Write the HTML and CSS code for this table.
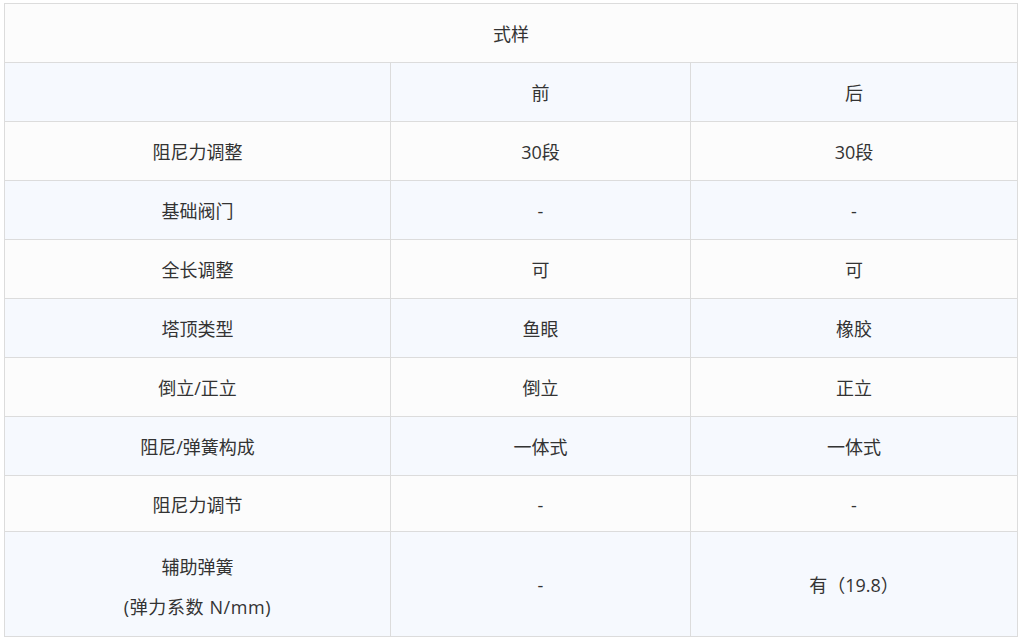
FILE: index.html
```html
<!DOCTYPE html>
<html lang="zh-CN">
<head>
<meta charset="utf-8">
<link rel="stylesheet" href="styles.css">
</head>
<body>
<table class="spec">
  <colgroup>
    <col class="c1">
    <col class="c2">
    <col class="c3">
  </colgroup>
  <tr class="r-w"><td colspan="3">式样</td></tr>
  <tr class="r-b"><td></td><td>前</td><td>后</td></tr>
  <tr class="r-w"><td>阻尼力调整</td><td>30段</td><td>30段</td></tr>
  <tr class="r-b"><td>基础阀门</td><td>-</td><td>-</td></tr>
  <tr class="r-w"><td>全长调整</td><td>可</td><td>可</td></tr>
  <tr class="r-b"><td>塔顶类型</td><td>鱼眼</td><td>橡胶</td></tr>
  <tr class="r-w"><td>倒立/正立</td><td>倒立</td><td>正立</td></tr>
  <tr class="r-b"><td>阻尼/弹簧构成</td><td>一体式</td><td>一体式</td></tr>
  <tr class="r-w r-short"><td>阻尼力调节</td><td>-</td><td>-</td></tr>
  <tr class="r-b r-tall"><td><div class="two"><span>辅助弹簧</span><span class="unit">(弹力系数 N/mm)</span></div></td><td>-</td><td>有（19.8）</td></tr>
</table>
</body>
</html>
```

FILE: styles.css
```css
html, body {
  margin: 0;
  padding: 0;
  background: #ffffff;
}
body {
  padding: 3px 0 0 4px;
  font-family: "Open Sans", "Noto Sans CJK SC", sans-serif;
  color: #333333;
}
.spec {
  border-collapse: collapse;
  width: 1013px;
  table-layout: fixed;
  font-size: 18px;
}
.c1 { width: 386px; }
.c2 { width: 300px; }
.c3 { width: 327px; }
.spec td {
  border: 1px solid #dcdcdc;
  text-align: center;
  vertical-align: middle;
  padding: 2px 0 0;
  height: 56px;
  line-height: 24px;
}
.r-w td { background: #fcfcfc; }
.r-b td { background: #f6f9fe; }
.r-short td { height: 53px; }
.r-tall td { height: 102px; }
.two {
  display: flex;
  flex-direction: column;
  align-items: center;
  gap: 16px;
  padding-top: 4px;
}
.unit { letter-spacing: 0.6px; }
```
